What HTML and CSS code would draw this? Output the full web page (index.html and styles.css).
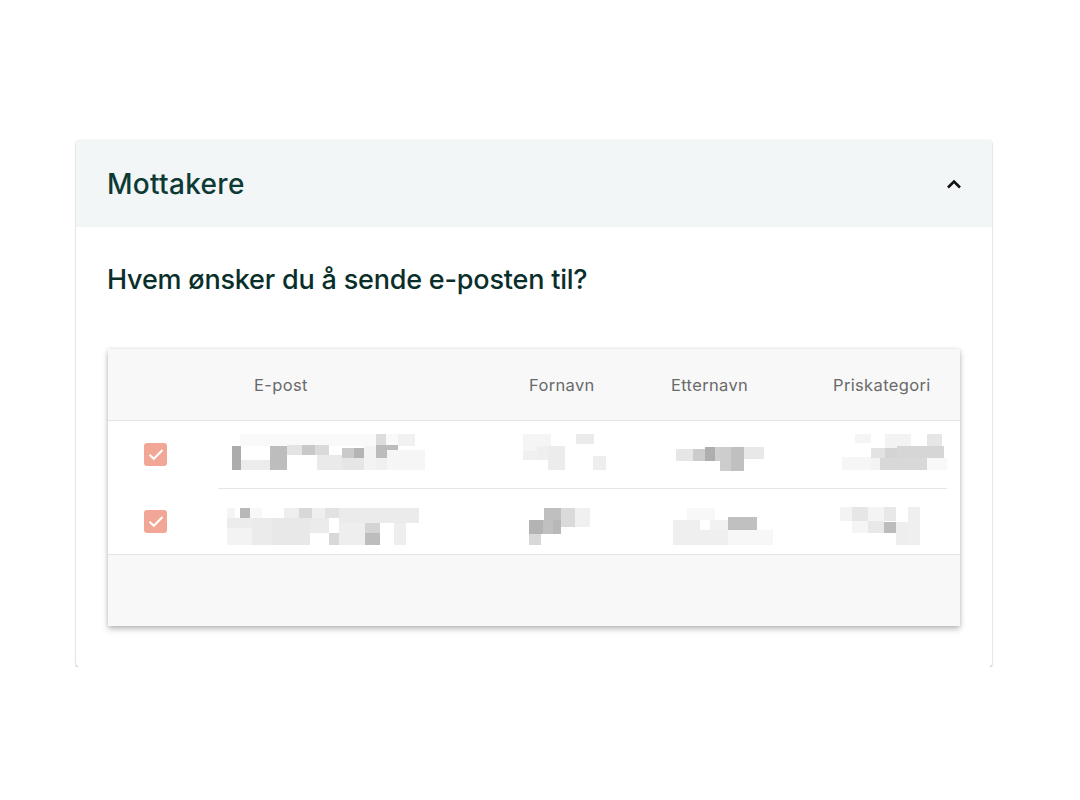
FILE: index.html
```html
<!DOCTYPE html>
<html lang="no">
<head>
  <meta charset="utf-8">
  <title>Mottakere</title>
  <link rel="stylesheet" href="styles.css">
</head>
<body>
<section class="card">
  <header class="card-head">
    <h2 class="card-title">Mottakere</h2>
    <svg class="chevron" width="16" height="10" viewBox="0 0 16 10"><path d="M2 8.5 L8 2.5 L14 8.5" fill="none" stroke="#111" stroke-width="2.6"/></svg>
  </header>
  <div class="card-body">
    <p class="question">Hvem ønsker du å sende e-posten til?</p>

    <div class="table">
      <div class="row row-head">
        <div class="cell"></div>
        <div class="cell th th-email">E-post</div>
        <div class="cell th th-first">Fornavn</div>
        <div class="cell th th-last">Etternavn</div>
        <div class="cell th th-cat">Priskategori</div>
      </div>

      <!-- row 1 -->
      <div class="row row-body">
        <div class="cell cell-check"><span class="check"><svg width="16" height="13" viewBox="0 0 16 13"><path d="M1.5 6.8 L5.8 10.8 L14.5 2" fill="none" stroke="#fff" stroke-width="2"/></svg></span></div>
        <div class="cell">
          <svg class="blur" width="297" height="67" viewBox="218 421 297 67">
            <rect x="240" y="434" width="160" height="12" fill="#f9f9f9"/>
            <rect x="232" y="446" width="9" height="24" fill="#acacac"/>
            <rect x="241" y="460" width="29" height="10" fill="#ececec"/>
            <rect x="270" y="446" width="17" height="24" fill="#bdbdbd"/>
            <rect x="287" y="445" width="15" height="10" fill="#e3e3e3"/>
            <rect x="302" y="445" width="13" height="10" fill="#c8c8c8"/>
            <rect x="315" y="445" width="14" height="10" fill="#dadada"/>
            <rect x="317" y="455" width="25" height="15" fill="#eaeaea"/>
            <rect x="342" y="448" width="12" height="10" fill="#cacaca"/>
            <rect x="354" y="448" width="10" height="10" fill="#b4b4b4"/>
            <rect x="342" y="458" width="22" height="12" fill="#e6e6e6"/>
            <rect x="364" y="446" width="12" height="24" fill="#f3f3f3"/>
            <rect x="376" y="434" width="10" height="11" fill="#dcdcdc"/>
            <rect x="376" y="445" width="22" height="13" fill="#bcbcbc"/>
            <rect x="376" y="458" width="11" height="12" fill="#f0f0f0"/>
            <rect x="387" y="450" width="38" height="20" fill="#f6f6f6"/>
            <rect x="398" y="434" width="17" height="12" fill="#f1f1f1"/>
          </svg>
        </div>
        <div class="cell">
          <svg class="blur" width="145" height="67" viewBox="515 421 145 67">
            <rect x="523" y="434" width="28" height="17" fill="#f5f5f5"/>
            <rect x="523" y="451" width="14" height="9" fill="#f0f0f0"/>
            <rect x="537" y="446" width="14" height="14" fill="#efefef"/>
            <rect x="548" y="446" width="17" height="24" fill="#ececec"/>
            <rect x="576" y="434" width="18" height="10" fill="#ebebeb"/>
            <rect x="593" y="456" width="13" height="14" fill="#eeeeee"/>
          </svg>
        </div>
        <div class="cell">
          <svg class="blur" width="170" height="67" viewBox="660 421 170 67">
            <rect x="676" y="449" width="17" height="12" fill="#e6e6e6"/>
            <rect x="693" y="449" width="12" height="12" fill="#cccccc"/>
            <rect x="705" y="447" width="10" height="14" fill="#aeaeae"/>
            <rect x="715" y="447" width="5" height="14" fill="#cfcfcf"/>
            <rect x="720" y="447" width="11" height="24" fill="#cdcdcd"/>
            <rect x="731" y="447" width="13" height="24" fill="#c0c0c0"/>
            <rect x="744" y="447" width="20" height="12" fill="#e8e8e8"/>
          </svg>
        </div>
        <div class="cell">
          <svg class="blur" width="130" height="67" viewBox="830 421 130 67">
            <rect x="855" y="434" width="16" height="9" fill="#f5f5f5"/>
            <rect x="885" y="434" width="26" height="14" fill="#f3f3f3"/>
            <rect x="927" y="434" width="15" height="12" fill="#e6e6e6"/>
            <rect x="871" y="448" width="14" height="10" fill="#e3e3e3"/>
            <rect x="885" y="448" width="12" height="10" fill="#d4d4d4"/>
            <rect x="897" y="446" width="47" height="12" fill="#d6d6d6"/>
            <rect x="842" y="457" width="29" height="13" fill="#f6f6f6"/>
            <rect x="871" y="458" width="9" height="12" fill="#f3f3f3"/>
            <rect x="880" y="458" width="47" height="12" fill="#d8d8d8"/>
            <rect x="927" y="458" width="20" height="12" fill="#f8f8f8"/>
          </svg>
        </div>
      </div>
      <div class="rule"></div>

      <!-- row 2 -->
      <div class="row row-body row-last">
        <div class="cell cell-check"><span class="check"><svg width="16" height="13" viewBox="0 0 16 13"><path d="M1.5 6.8 L5.8 10.8 L14.5 2" fill="none" stroke="#fff" stroke-width="2"/></svg></span></div>
        <div class="cell">
          <svg class="blur" width="297" height="65" viewBox="218 489 297 65">
            <rect x="227" y="508" width="8" height="10" fill="#f5f5f5"/>
            <rect x="240" y="508" width="10" height="10" fill="#b8b8b8"/>
            <rect x="250" y="508" width="12" height="10" fill="#f8f8f8"/>
            <rect x="284" y="508" width="15" height="10" fill="#eeeeee"/>
            <rect x="299" y="508" width="13" height="10" fill="#d8d8d8"/>
            <rect x="312" y="508" width="13" height="10" fill="#efefef"/>
            <rect x="325" y="508" width="14" height="10" fill="#e2e2e2"/>
            <rect x="339" y="508" width="80" height="15" fill="#ebebeb"/>
            <rect x="227" y="518" width="45" height="10" fill="#ececec"/>
            <rect x="227" y="528" width="25" height="17" fill="#f3f3f3"/>
            <rect x="252" y="518" width="20" height="27" fill="#ebebeb"/>
            <rect x="272" y="518" width="38" height="27" fill="#e8e8e8"/>
            <rect x="310" y="518" width="19" height="15" fill="#ebebeb"/>
            <rect x="329" y="533" width="10" height="12" fill="#d8d8d8"/>
            <rect x="339" y="523" width="26" height="22" fill="#eeeeee"/>
            <rect x="365" y="523" width="15" height="10" fill="#d4d4d4"/>
            <rect x="365" y="533" width="15" height="12" fill="#bdbdbd"/>
            <rect x="394" y="523" width="12" height="22" fill="#eeeeee"/>
          </svg>
        </div>
        <div class="cell">
          <svg class="blur" width="145" height="65" viewBox="515 489 145 65">
            <rect x="544" y="508" width="17" height="19" fill="#bfbfbf"/>
            <rect x="561" y="508" width="14" height="19" fill="#dadada"/>
            <rect x="575" y="508" width="15" height="19" fill="#f0f0f0"/>
            <rect x="529" y="520" width="14" height="14" fill="#b3b3b3"/>
            <rect x="543" y="520" width="10" height="14" fill="#c0c0c0"/>
            <rect x="553" y="520" width="8" height="14" fill="#b8b8b8"/>
            <rect x="529" y="534" width="12" height="11" fill="#d8d8d8"/>
          </svg>
        </div>
        <div class="cell">
          <svg class="blur" width="170" height="65" viewBox="660 489 170 65">
            <rect x="687" y="508" width="28" height="12" fill="#f8f8f8"/>
            <rect x="673" y="520" width="27" height="25" fill="#efefef"/>
            <rect x="700" y="530" width="28" height="15" fill="#efefef"/>
            <rect x="710" y="520" width="18" height="10" fill="#f2f2f2"/>
            <rect x="728" y="517" width="29" height="13" fill="#c0c0c0"/>
            <rect x="728" y="530" width="45" height="15" fill="#f7f7f7"/>
          </svg>
        </div>
        <div class="cell">
          <svg class="blur" width="130" height="65" viewBox="830 489 130 65">
            <rect x="840" y="507" width="12" height="14" fill="#f3f3f3"/>
            <rect x="852" y="507" width="16" height="14" fill="#e6e6e6"/>
            <rect x="868" y="507" width="16" height="14" fill="#f4f4f4"/>
            <rect x="884" y="507" width="12" height="14" fill="#e8e8e8"/>
            <rect x="852" y="521" width="16" height="12" fill="#f5f5f5"/>
            <rect x="868" y="521" width="16" height="12" fill="#e8e8e8"/>
            <rect x="884" y="522" width="12" height="11" fill="#bcbcbc"/>
            <rect x="896" y="522" width="12" height="23" fill="#eeeeee"/>
            <rect x="908" y="507" width="12" height="38" fill="#efefef"/>
          </svg>
        </div>
      </div>

      <div class="table-foot"></div>
    </div>
  </div>
</section>
</body>
</html>
```

FILE: styles.css
```css
body {
    margin: 0;
    padding: 140px 0 0 76px;
    background: #fff;
    font-family: Inter, "Noto Sans", sans-serif;
}

.card {
    width: 916px;
    background: #fff;
    border-radius: 4px;
    box-shadow: 0 1px 2px rgba(0, 0, 0, 0.3), 0 0 1px rgba(0, 0, 0, 0.16);
    overflow: hidden;
}

.card-head {
    height: 87px;
    background: #f2f6f6;
    display: flex;
    align-items: center;
    justify-content: space-between;
    padding: 0 30px 0 31px;
}
.card-title {
    margin: 0;
    font-size: 28px;
    font-weight: 500;
    color: #0e3a36;
    letter-spacing: 0.3px;
}
.chevron { display: block; }

.card-body {
    padding: 35px 32px 41px 31px;
}
.question {
    margin: 0 0 51px 0;
    font-size: 27px;
    line-height: 36px;
    font-weight: 500;
    color: #0a2f2b;
    letter-spacing: -0.2px;
}

.table {
    box-shadow: 0 3px 6px rgba(0, 0, 0, 0.26), 0 0 3px rgba(0, 0, 0, 0.1);
    background: #fff;
    margin-left: 1px;
}
.row {
    display: grid;
    grid-template-columns: 110px 297px 145px 170px 130px;
}
.row-head {
    height: 71px;
    background: #f8f8f8;
    border-bottom: 1px solid #e4e4e4;
}
.row-body { height: 67px; }
.row-last {
    height: 65px;
    border-bottom: 1px solid #e4e4e4;
}
.cell {
    display: flex;
    align-items: center;
}
.th {
    font-size: 16.5px;
    color: #6a6a6a;
    padding-top: 1px;
    letter-spacing: 0.35px;
}
.th-email { padding-left: 36px; }
.th-first { padding-left: 14px; }
.th-last { padding-left: 11px; }
.th-cat { padding-left: 3px; }

.cell-check {
    padding-left: 36px;
}
.check {
    width: 23px;
    height: 23px;
    border-radius: 3px;
    background: #f2a796;
    display: flex;
    align-items: center;
    justify-content: center;
}
.blur { display: block; }

.rule {
    height: 1px;
    background: #e6e6e6;
    margin: 0 13px 0 110px;
}
.table-foot {
    height: 71px;
    background: #f8f8f8;
}
```
